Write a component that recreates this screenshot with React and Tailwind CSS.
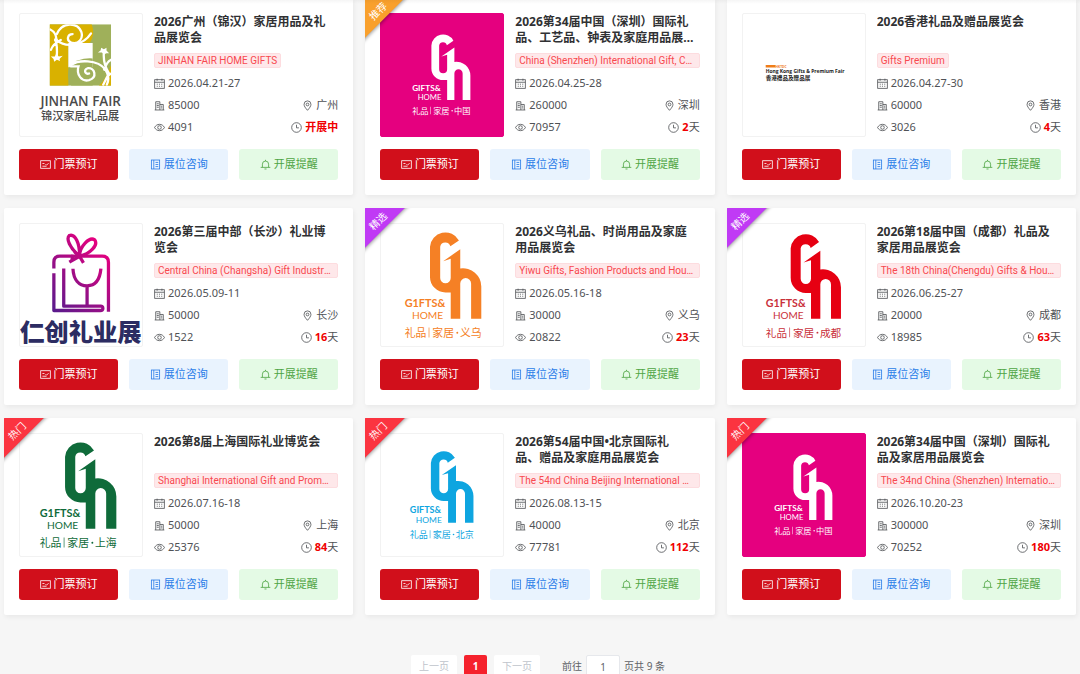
import React, { useState } from 'react'

const exhibitions = [
  { title: '2026广州（锦汉）家居用品及礼品展览会', en: 'JINHAN FAIR HOME GIFTS', date: '2026.04.21-27', area: '85000', views: '4091', city: '广州', days: 0, logo: 'jinhan' },
  { title: '2026第34届中国（深圳）国际礼品、工艺品、钟表及家庭用品展览会', en: 'China (Shenzhen) International Gift, Commodity and Houseware Fair', date: '2026.04.25-28', area: '260000', views: '70957', city: '深圳', days: 2, logo: 'pink', place: '中国', ribbon: '推荐' },
  { title: '2026香港礼品及赠品展览会', en: 'Gifts Premium', date: '2026.04.27-30', area: '60000', views: '3026', city: '香港', days: 4, logo: 'hongkong' },
  { title: '2026第三届中部（长沙）礼业博览会', en: 'Central China (Changsha) Gift Industry Expo', date: '2026.05.09-11', area: '50000', views: '1522', city: '长沙', days: 16, logo: 'changsha' },
  { title: '2026义乌礼品、时尚用品及家庭用品展览会', en: 'Yiwu Gifts, Fashion Products and Household Fair', date: '2026.05.16-18', area: '30000', views: '20822', city: '义乌', days: 23, logo: 'orange', place: '义乌', ribbon: '精选' },
  { title: '2026第18届中国（成都）礼品及家居用品展览会', en: 'The 18th China(Chengdu) Gifts & Houseware Fair', date: '2026.06.25-27', area: '20000', views: '18985', city: '成都', days: 63, logo: 'red', place: '成都', ribbon: '精选' },
  { title: '2026第8届上海国际礼业博览会', en: 'Shanghai International Gift and Promotion Fair', date: '2026.07.16-18', area: '50000', views: '25376', city: '上海', days: 84, logo: 'green', place: '上海', ribbon: '热门' },
  { title: '2026第54届中国•北京国际礼\n品、赠品及家庭用品展览会', en: 'The 54nd China Beijing International Gifts Fair', date: '2026.08.13-15', area: '40000', views: '77781', city: '北京', days: 112, logo: 'blue', place: '北京', ribbon: '热门' },
  { title: '2026第34届中国（深圳）国际礼品及家居用品展览会', en: 'The 34nd China (Shenzhen) International Gifts Fair', date: '2026.10.20-23', area: '300000', views: '70252', city: '深圳', days: 180, logo: 'pink', place: '中国', ribbon: '热门' }
]

const ribbonColors = {
  推荐: 'bg-[#f9a02c]',
  精选: 'bg-[#c03af5]',
  热门: 'bg-[#fb3440]'
}

const ghStyles = {
  orange: { color: '#f58025', transform: 'translate(0 0)' },
  red: { color: '#e60012', textColor: '#c9303a', transform: 'translate(-1 6) scale(0.98)' },
  green: { color: '#0f6b3a', transform: 'translate(-12 0)' },
  blue: { color: '#0ea5e0', transform: 'translate(28 31) scale(0.83)' },
  pink: { color: '#ffffff', transform: 'translate(40 43) scale(0.76)' }
}

const iconPaths = {
  date: (
    <>
      <rect x="1" y="2.500" width="14" height="12.500" />
      <path d="M1 6.200h14M4.500 1v3M11.500 1v3" />
      <path d="M4 9h1.500M7.200 9h1.500M10.500 9H12M4 12h1.500M7.200 12h1.500M10.500 12H12" />
    </>
  ),
  area: (
    <>
      <path d="M2.500 14.500v-12h6v12M8.500 6.500h5v8M1 14.500h14" />
      <path d="M4 5.500h3M4 8h3M4 10.500h3M10 9h2M10 11.500h2" />
    </>
  ),
  view: (
    <>
      <path d="M.8 8C2.400 5 5 3.400 8 3.400S13.600 5 15.200 8c-1.600 3-4.200 4.600-7.200 4.600S2.400 11 .8 8z" />
      <circle cx="8" cy="8" r="2.600" />
    </>
  ),
  location: (
    <>
      <path d="M8 15C5 11.600 3 9 3 6.300a5 5 0 0 1 10 0C13 9 11 11.600 8 15z" />
      <circle cx="8" cy="6.500" r="2" />
    </>
  ),
  time: (
    <>
      <circle cx="8" cy="8" r="7" />
      <path d="M8 4v4.500h3.500" />
    </>
  ),
  ticket: (
    <>
      <rect x="1" y="2.500" width="14" height="11" />
      <path d="M3.500 6.500h3M3.500 10.500h6M8 7.500l1.500 1.500 3-3" />
    </>
  ),
  booth: (
    <>
      <rect x="2" y="1.500" width="12" height="13" />
      <path d="M5.500 1.500v13M8 5h4M8 8h4M8 11h4" />
    </>
  ),
  bell: <path d="M3.500 12V7.500a4.500 4.500 0 0 1 9 0V12M1 12.200h14M8 3V1.200M6.500 14.500h3" />
}

function Icon({ name }) {
  return (
    <svg viewBox="0 0 16 16" className="size-[11px] shrink-0" fill="none" stroke="currentColor" strokeWidth="1.200" aria-hidden="true">
      {iconPaths[name]}
    </svg>
  )
}

function GhLogo({ variant, place }) {
  const { color, textColor, transform } = ghStyles[variant]
  return (
    <g transform={transform} fill={textColor || color}>
      <path
        fill={color}
        d="M237 50A47 47 0 0 0 149 69V161A47 47 0 0 0 196 208H212V288H241V181a16 16 0 0 1 33 0V288H305V190A56 56 0 0 0 241 135V77L189 113L212 106V164a16 16 0 0 1-32 0V69A16 16 0 0 1 211 68z"
      />
      <g className="font-['Lato','Noto_Sans_CJK_SC',sans-serif]">
        <text x="72" y="251" fontSize="33" fontWeight="700">{variant === 'pink' || variant === 'blue' ? 'GIFTS&' : 'G1FTS&'}</text>
        <text x="94" y="288" fontSize="31">HOME</text>
      </g>
      <path d="M145 315h2v30h-2z" />
      <g className="font-['Noto_Sans_CJK_SC',sans-serif]" fontSize="33">
        <text x="72" y="343">礼品</text>
        <text x="156" y="343">家居</text>
        <circle cx="232" cy="331" r="3" />
        <text x="240" y="343">{place}</text>
      </g>
    </g>
  )
}

function JinhanLogo() {
  return (
    <>
      <svg x="90" y="31" width="187" height="187" viewBox="0 0 187 187">
        <path fill="#9fb05a" d="M0 0h187v187H0z" />
        <path fill="#d9b100" d="M0 0h128a62 62 0 0 1-6 57H57v130H0zM150 187q24-24 37-64v64z" />
        <path fill="#fff" d="M57 57h74v74H57z" />
        <path fill="#9fb05a" d="M131 104v83H66q-18-28-4-58 24-28 69-25z" />
        <g fill="none" stroke="#fff" strokeWidth="7" strokeLinecap="round">
          <path d="M2 16c14 6 20 22 18 38M4 78c6-16 14-22 30-30M20 54c4 24 2 30 2 44M22 30c16-38 62-36 74-8 8 22-8 40-30 34-16-6-12-26 4-26" />
          <path d="M20 48c34 28 84 14 106-20" />
          <path d="M66 124c20-16 80-18 104 14 10 16 10 34 4 46M165 88c-2 26 4 44 16 62M187 108c-12 6-16 16-18 26M187 150c-10 2-14 14-24 34" />
          <path d="M64 128h24c-8 26 10 48 32 42 26-8 18-38-4-36-14 4-8 20 4 16" />
        </g>
        <g fill="#fff">
          <path d="M20 90l8 8 12-2-10 10 2 6-10-4-8 6-2-8-8-8 12 0zM165 92l8-4 8 0-8-8 0-8-8 4-8-4-2 8-8 6 12 0z" />
          <circle cx="19" cy="48" r="6" />
          <circle cx="168" cy="136" r="6" />
        </g>
      </svg>
      <g fill="#4a4a4a">
        <text x="62" y="279" fontSize="41" fontWeight="600" className="font-['Open_Sans',sans-serif]">JINHAN FAIR</text>
        <text x="64" y="321" fontSize="34" fontWeight="500" className="font-['Noto_Sans_CJK_SC',sans-serif]">锦汉家居礼品展</text>
      </g>
    </>
  )
}

function ChangshaLogo() {
  return (
    <>
      <defs>
        <linearGradient id="gift" gradientUnits="userSpaceOnUse" x1="100" y1="260" x2="270" y2="90">
          <stop offset="0" stopColor="#5a1a8c" />
          <stop offset="1" stopColor="#e5007f" />
        </linearGradient>
      </defs>
      <g fill="none" stroke="url(#gift)" strokeWidth="10">
        <path d="M103 135V116q0-18 18-18H250q19 0 19 19V267M103 150V263H244q8 0 8-7t-8-6H133V135" strokeLinejoin="round" />
        <path d="M161 136c2 34 18 52 43 52s39-18 42-52M204 188V246" />
        <path d="M181 98C150 72 140 44 150 35c18-6 32 24 31 63zM181 98c0-30 30-60 46-50 12 16-14 44-46 50z" />
        <path d="M150 116l31-18 12 20M161 94l-4 20M181 98l-16-14" />
      </g>
      <text x="0" y="357" fontSize="74" fontWeight="900" fill="#2c2c62" className="font-['Noto_Sans_CJK_SC',sans-serif]">仁创礼业展</text>
    </>
  )
}

function HongKongLogo() {
  return (
    <g fontWeight="700" className="font-['Open_Sans','Noto_Sans_CJK_TC',sans-serif]">
      <path fill="#ef7d1a" d="M69 155h30v8H69z" />
      <text x="99" y="163" fontSize="10" fill="#ef7d1a">HKTDC</text>
      <text x="69" y="180" fontSize="15" fill="#222222">Hong Kong Gifts &amp; Premium Fair</text>
      <text x="69" y="201" fontSize="17" fill="#222222">香港禮品及贈品展</text>
    </g>
  )
}

function Logo({ item }) {
  return (
    <div className={`size-[124px] shrink-0 overflow-hidden rounded-xs border ${item.logo === 'pink' ? 'border-[#e5007f] bg-[#e5007f]' : 'border-[#f2f2f2] bg-white'}`}>
      <svg viewBox="0 0 371 371" className="size-full" role="img" aria-label={item.title}>
        {item.logo === 'jinhan' && <JinhanLogo />}
        {item.logo === 'changsha' && <ChangshaLogo />}
        {item.logo === 'hongkong' && <HongKongLogo />}
        {item.place && <GhLogo variant={item.logo} place={item.place} />}
      </svg>
    </div>
  )
}

function Ribbon({ label }) {
  return (
    <div className="absolute top-0 left-0 size-14 overflow-hidden">
      <div className={`absolute -top-1 -left-[30px] flex h-7 w-20 -rotate-45 items-end justify-center pb-1 text-[10px] leading-3 text-white shadow-[0_1px_4px_rgba(0,0,0,0.4)] ${ribbonColors[label]}`}>
        {label}
      </div>
    </div>
  )
}

function ExhibitionCard({ item }) {
  return (
    <article className="relative rounded-xs bg-white p-[15px] shadow-[1px_2px_5px_rgba(0,0,0,0.06)]">
      <div className="flex gap-[11px]">
        <Logo item={item} />
        <div className="min-w-0 flex-1">
          <h3 className="line-clamp-2 h-[33px] pt-px pr-1 text-[12px] leading-4 font-bold whitespace-pre-line text-[#303133]">{item.title}</h3>
          <div className="mt-[7px] flex">
            <span className="h-[15px] truncate rounded-xs border border-[#fddcdf] bg-[#fee8ea] px-[3px] font-['Roboto',sans-serif] text-[10px] leading-[14px] text-[#f8494f]">
              {item.en}
            </span>
          </div>
          <div className="mt-[7px] space-y-1.5 text-[11px] leading-4 text-[#505256]">
            <div className="flex items-center gap-[3px]">
              <Icon name="date" />
              <span>{item.date}</span>
            </div>
            <div className="flex items-center gap-[3px]">
              <Icon name="area" />
              <span>{item.area}</span>
              <span className="ml-auto flex items-center gap-[3px]">
                <Icon name="location" />
                {item.city}
              </span>
            </div>
            <div className="flex items-center gap-[3px]">
              <Icon name="view" />
              <span>{item.views}</span>
              <span className="ml-auto flex items-center gap-[3px]">
                <Icon name="time" />
                {item.days > 0 ? (
                  <span><b className="text-[#f00000]">{item.days}</b>天</span>
                ) : (
                  <b className="text-[#f00000]">开展中</b>
                )}
              </span>
            </div>
          </div>
        </div>
      </div>
      <div className="mt-3 grid grid-cols-3 gap-[11px] text-[11px]">
        <button className="flex h-[31px] items-center justify-center gap-[3px] rounded-[3px] bg-[#d10f1b] text-white">
          <Icon name="ticket" />
          门票预订
        </button>
        <button className="flex h-[31px] items-center justify-center gap-[3px] rounded-[3px] bg-[#e9f3fe] text-[#2a7de8]">
          <Icon name="booth" />
          展位咨询
        </button>
        <button className="flex h-[31px] items-center justify-center gap-[3px] rounded-[3px] bg-[#e4fae5] text-[#4fa544]">
          <Icon name="bell" />
          开展提醒
        </button>
      </div>
      {item.ribbon && <Ribbon label={item.ribbon} />}
    </article>
  )
}

function Pagination() {
  const [page, setPage] = useState('1')
  return (
    <nav className="mt-10 flex items-center justify-center pr-1 text-[10px] text-[#606266]">
      <button disabled className="h-[23px] rounded-xs bg-white px-2 text-[#c0c4cc]">上一页</button>
      <button className="mx-[7px] h-[23px] w-[23px] rounded-xs bg-[#f5222d] font-bold text-white">1</button>
      <button disabled className="h-[23px] rounded-xs bg-white px-2 text-[#c0c4cc]">下一页</button>
      <label htmlFor="jump" className="ml-[22px]">前往</label>
      <input
        id="jump"
        value={page}
        onChange={e => setPage(e.target.value)}
        className="mx-1 h-[23px] w-[34px] rounded-xs border border-[#e6e8ec] bg-white text-center"
      />
      <span>页共 9 条</span>
    </nav>
  )
}

export default function App() {
  return (
    <div className="relative min-h-screen bg-[#f6f6f6] font-['Noto_Sans','Noto_Sans_CJK_SC',sans-serif]">
      <main className="-mt-0.5 px-1">
        <div className="grid grid-cols-3 gap-x-3 gap-y-[13px]">
          {exhibitions.map((item, i) => (
            <ExhibitionCard key={i} item={item} />
          ))}
        </div>
        <Pagination />
      </main>
      {/* Shadow of the fixed header */}
      <div className="absolute inset-x-0 top-0 h-1.5 bg-linear-to-b from-black/6 to-transparent" />
    </div>
  )
}
